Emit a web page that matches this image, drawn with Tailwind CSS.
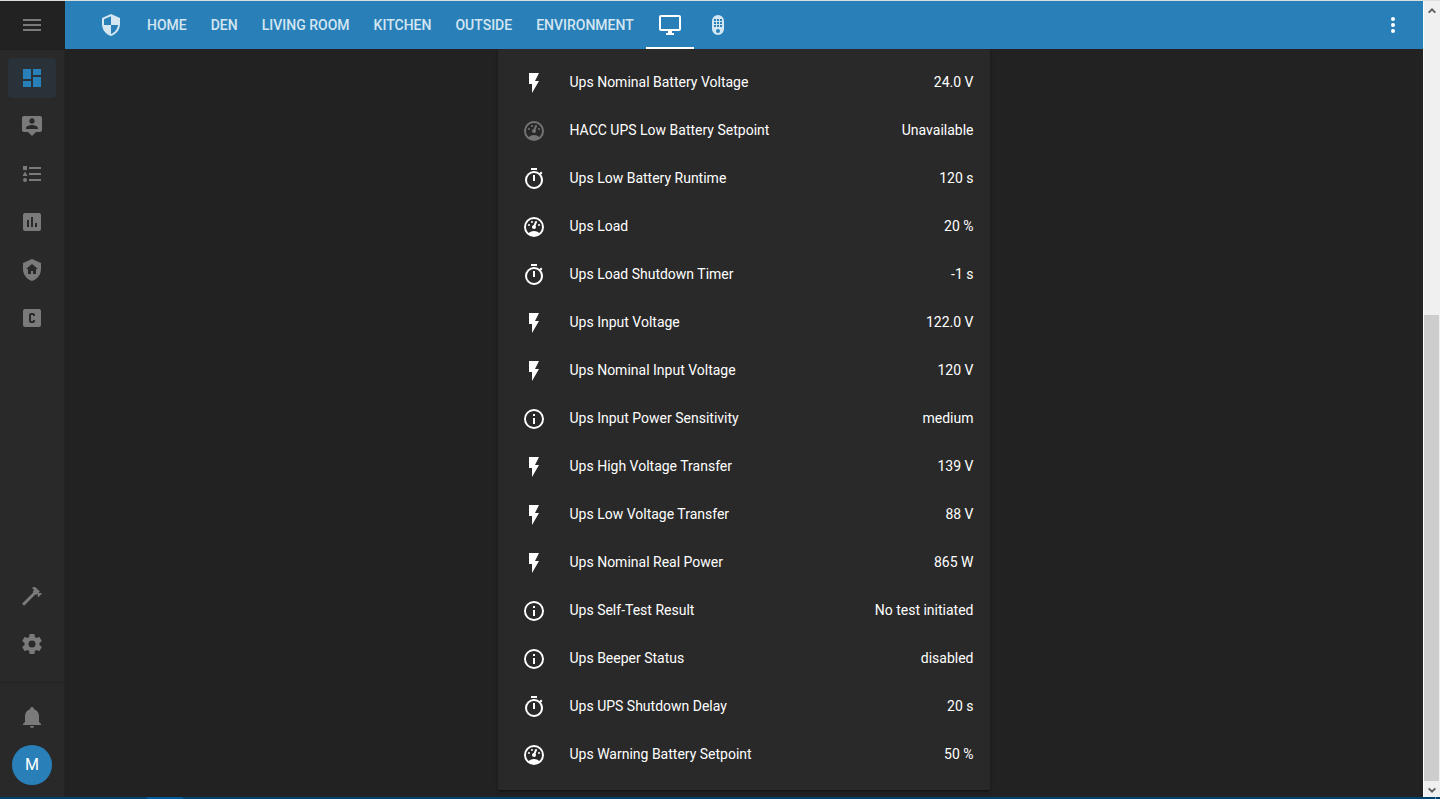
<!DOCTYPE html>
<html lang="en">
<head>
<meta charset="utf-8">
<title>Home Assistant</title>
<script src="https://cdn.jsdelivr.net/npm/@tailwindcss/browser@4"></script>
</head>
<body class="h-[799px] overflow-hidden bg-[#222222] font-[Roboto,sans-serif] text-sm text-white">
<svg class="hidden">
  <symbol id="flash" viewBox="0 0 24 24"><path d="M7,2V13H10V22L17,10H13L17,2H7Z"/></symbol>
  <symbol id="gauge" viewBox="0 0 24 24"><path fill-rule="evenodd" d="M12,2A10,10 0 0,0 2,12A10,10 0 0,0 12,22A10,10 0 0,0 22,12A10,10 0 0,0 12,2M12,4A8,8 0 0,1 20,12C20,14.4 19,16.5 17.3,18C15.9,16.7 14,16 12,16C10,16 8.2,16.7 6.7,18C5,16.5 4,14.4 4,12A8,8 0 0,1 12,4M14,5.89C13.62,5.9 13.26,6.15 13.1,6.54L11.81,9.77L11.71,10C11,10.13 10.41,10.6 10.14,11.26C9.73,12.29 10.23,13.45 11.26,13.86C12.29,14.27 13.45,13.77 13.86,12.74C14.12,12.08 14,11.32 13.57,10.76L13.67,10.5L14.96,7.29L14.97,7.26C15.17,6.75 14.92,6.17 14.41,5.96C14.28,5.91 14.15,5.89 14,5.89M10,6A1,1 0 0,0 9,7A1,1 0 0,0 10,8A1,1 0 0,0 11,7A1,1 0 0,0 10,6M7,9A1,1 0 0,0 6,10A1,1 0 0,0 7,11A1,1 0 0,0 8,10A1,1 0 0,0 7,9M17,9A1,1 0 0,0 16,10A1,1 0 0,0 17,11A1,1 0 0,0 18,10A1,1 0 0,0 17,9Z"/></symbol>
  <symbol id="timer" viewBox="0 0 24 24"><path fill-rule="evenodd" d="M12,20A7,7 0 0,1 5,13A7,7 0 0,1 12,6A7,7 0 0,1 19,13A7,7 0 0,1 12,20M19.03,7.39L20.45,5.97C20,5.46 19.55,5 19.04,4.56L17.62,6C16.07,4.74 14.12,4 12,4A9,9 0 0,0 3,13A9,9 0 0,0 12,22C17,22 21,17.97 21,13C21,10.88 20.26,8.93 19.03,7.39M11,14H13V8H11M15,1H9V3H15V1Z"/></symbol>
  <symbol id="info" viewBox="0 0 24 24"><path fill-rule="evenodd" d="M11,9H13V7H11M12,20C7.59,20 4,16.41 4,12C4,7.59 7.59,4 12,4C16.41,4 20,7.59 20,12C20,16.41 16.41,20 12,20M12,2A10,10 0 0,0 2,12A10,10 0 0,0 12,22A10,10 0 0,0 22,12A10,10 0 0,0 12,2M11,17H13V11H11V17Z"/></symbol>
</svg>
<div class="flex h-full flex-col">
  <div class="h-px shrink-0 bg-[#dcdfe0]"></div>
  <div class="flex min-h-0 flex-1">
    <aside class="flex w-[65px] shrink-0 flex-col border-r border-[#242424] bg-[#292929] text-[#7a7a7a]">
      <div class="-mr-px flex h-[49px] shrink-0 items-start border-b border-[#1e1e1e] bg-[#222222] pt-3 pl-5">
        <svg class="size-6 fill-current" viewBox="0 0 24 24"><path d="M3,6H21V8H3V6M3,11H21V13H3V11M3,16H21V18H3V16Z"/></svg>
      </div>
      <nav class="flex flex-1 flex-col gap-2 px-2 pt-2">
        <a class="flex h-10 w-12 items-center justify-center rounded bg-[#293239] text-[#2980b9]"><svg class="size-6 fill-current" viewBox="0 0 24 24"><path d="M13,3V9H21V3M13,21H21V11H13M3,21H11V15H3M3,13H11V3H3V13Z"/></svg></a>
        <a class="flex h-10 w-12 items-center justify-center"><svg class="size-6 fill-current" viewBox="0 0 24 24"><path fill-rule="evenodd" d="M4,2H20A2,2 0 0,1 22,4V16A2,2 0 0,1 20,18H16L12,22L8,18H4C2.89,18 2,17.1 2,16V4C2,2.89 2.9,2 4,2M12,4.3C10.5,4.3 9.3,5.5 9.3,7C9.3,8.5 10.5,9.7 12,9.7C13.5,9.7 14.7,8.5 14.7,7C14.7,5.5 13.5,4.3 12,4.3M18,15V14.1C18,12.1 14,11 12,11C10,11 6,12.1 6,14.1V15H18Z"/></svg></a>
        <a class="flex h-10 w-12 items-center justify-center"><svg class="size-6 fill-current" viewBox="0 0 24 24"><path d="M5,9.5L7.5,14H2.5L5,9.5M3,4H7V8H3V4M5,20A2,2 0 0,0 7,18A2,2 0 0,0 5,16A2,2 0 0,0 3,18A2,2 0 0,0 5,20M9,5V7H21V5H9M9,19H21V17H9V19M9,13H21V11H9V13Z"/></svg></a>
        <a class="flex h-10 w-12 items-center justify-center"><svg class="size-6 fill-current" viewBox="0 0 24 24"><path fill-rule="evenodd" d="M9,17H7V10H9M13,17H11V7H13M17,17H15V13H17M19,3H5A2,2 0 0,0 3,5V19A2,2 0 0,0 5,21H19A2,2 0 0,0 21,19V5A2,2 0 0,0 19,3Z"/></svg></a>
        <a class="flex h-10 w-12 items-center justify-center"><svg class="size-6 fill-current" viewBox="0 0 24 24"><path fill-rule="evenodd" d="M11,13H13V16H16V11H18L12,6L6,11H8V16H11V13M12,1L21,5V11C21,16.55 17.16,21.74 12,23C6.84,21.74 3,16.55 3,11V5L12,1Z"/></svg></a>
        <a class="flex h-10 w-12 items-center justify-center"><svg class="size-6 fill-current" viewBox="0 0 24 24"><path fill-rule="evenodd" d="M5,3H19A2,2 0 0,1 21,5V19A2,2 0 0,1 19,21H5A2,2 0 0,1 3,19V5A2,2 0 0,1 5,3M11,7A2,2 0 0,0 9,9V15A2,2 0 0,0 11,17H13A2,2 0 0,0 15,15V14H13V15H11V9H13V10H15V9A2,2 0 0,0 13,7H11Z"/></svg></a>
      </nav>
      <div class="flex h-[107px] shrink-0 flex-col gap-2 border-b border-[#222222] px-2">
        <a class="flex h-10 w-12 items-center justify-center"><svg class="size-6 fill-current" viewBox="0 0 24 24"><path d="M2,19.63L13.43,8.2L12.72,7.5L14.14,6.07L12,3.89C13.2,2.7 15.09,2.7 16.27,3.89L19.87,7.5L18.45,8.91H21.29L22,9.62L18.45,13.21L17.74,12.5V9.62L16.27,11.04L15.56,10.33L4.13,21.76L2,19.63Z"/></svg></a>
        <a class="flex h-10 w-12 items-center justify-center"><svg class="size-6 fill-current" viewBox="0 0 24 24"><path fill-rule="evenodd" d="M12,15.5A3.5,3.5 0 0,1 8.5,12A3.5,3.5 0 0,1 12,8.5A3.5,3.5 0 0,1 15.5,12A3.5,3.5 0 0,1 12,15.5M19.43,12.97C19.47,12.65 19.5,12.33 19.5,12C19.5,11.67 19.47,11.34 19.43,11L21.54,9.37C21.73,9.22 21.78,8.95 21.66,8.73L19.66,5.27C19.54,5.05 19.27,4.96 19.05,5.05L16.56,6.05C16.04,5.66 15.5,5.32 14.87,5.07L14.5,2.42C14.46,2.18 14.25,2 14,2H10C9.75,2 9.54,2.18 9.5,2.42L9.13,5.07C8.5,5.32 7.96,5.66 7.44,6.05L4.95,5.05C4.73,4.96 4.46,5.05 4.34,5.27L2.34,8.73C2.21,8.95 2.27,9.22 2.46,9.37L4.57,11C4.53,11.34 4.5,11.67 4.5,12C4.5,12.33 4.53,12.65 4.57,12.97L2.46,14.63C2.27,14.78 2.21,15.05 2.34,15.27L4.34,18.73C4.46,18.95 4.73,19.03 4.95,18.95L7.44,17.94C7.96,18.34 8.5,18.68 9.13,18.93L9.5,21.58C9.54,21.82 9.75,22 10,22H14C14.25,22 14.46,21.82 14.5,21.58L14.87,18.93C15.5,18.67 16.04,18.34 16.56,17.94L19.05,18.95C19.27,19.03 19.54,18.95 19.66,18.73L21.66,15.27C21.78,15.05 21.73,14.78 21.54,14.63L19.43,12.97Z"/></svg></a>
      </div>
      <div class="flex h-[114px] shrink-0 flex-col items-center gap-4 pt-[22px]">
        <svg class="size-6 shrink-0 fill-current" viewBox="0 0 24 24"><path d="M21,19V20H3V19L5,17V11C5,7.9 7.03,5.17 10,4.29C10,4.19 10,4.1 10,4A2,2 0 0,1 12,2A2,2 0 0,1 14,4C14,4.1 14,4.19 14,4.29C16.97,5.17 19,7.9 19,11V17L21,19M14,21A2,2 0 0,1 12,23A2,2 0 0,1 10,21"/></svg>
        <div class="flex size-10 shrink-0 items-center justify-center rounded-full bg-[#2980b9] text-base text-white">M</div>
      </div>
    </aside>
    <div class="flex min-w-0 flex-1 flex-col">
      <header class="flex h-12 shrink-0 items-stretch bg-[#2980b9] pl-[22px] font-medium text-[#d4e6f1]">
        <div class="flex w-12 items-center justify-center"><svg class="size-6 fill-current" viewBox="0 0 24 24"><path fill-rule="evenodd" d="M12,12H19C18.47,16.11 15.72,19.78 12,20.92V12H5V6.3L12,3.19M12,1L3,5V11C3,16.55 6.84,21.73 12,23C17.16,21.73 21,16.55 21,11V5L12,1Z"/></svg></div>
        <div class="flex items-center px-3">HOME</div>
        <div class="flex items-center px-3">DEN</div>
        <div class="flex items-center px-3">LIVING ROOM</div>
        <div class="flex items-center px-3">KITCHEN</div>
        <div class="flex items-center px-3">OUTSIDE</div>
        <div class="flex items-center px-3">ENVIRONMENT</div>
        <div class="flex w-12 items-center justify-center border-b-2 border-white pt-0.5 text-white"><svg class="size-6 fill-current" viewBox="0 0 24 24"><path fill-rule="evenodd" d="M21,16H3V4H21M21,2H3C1.89,2 1,2.89 1,4V16A2,2 0 0,0 3,18H10V20H8V22H16V20H14V18H21A2,2 0 0,0 23,16V4C23,2.89 22.1,2 21,2Z"/></svg></div>
        <div class="flex w-12 items-center justify-center"><svg class="size-6 fill-current" viewBox="0 0 24 24"><path fill-rule="evenodd" d="M12,2A6,6 0 0,1 18,8V16A6,6 0 0,1 6,16V8A6,6 0 0,1 12,2M8,6V8H10V6M11,6V8H13V6M14,6V8H16V6M8,9V11H10V9M11,9V11H13V9M14,9V11H16V9M8,12V14H10V12M11,12V14H13V12M14,12V14H16V12M12,16A2,2 0 0,0 12,20A2,2 0 0,0 12,16Z"/></svg></div>
        <div class="ml-auto flex items-center pr-[18px] text-white"><svg class="size-6 fill-current" viewBox="0 0 24 24"><circle cx="12" cy="6" r="2"/><circle cx="12" cy="12" r="2"/><circle cx="12" cy="18" r="2"/></svg></div>
      </header>
      <main class="flex min-h-0 flex-1 overflow-hidden pl-[433px]">
        <section id="rows" class="h-[741px] w-[492px] rounded-b-xs bg-[#292929] px-4 pt-[9px] shadow-[0_2px_2px_0_rgba(0,0,0,0.14),0_1px_5px_0_rgba(0,0,0,0.12),0_3px_1px_-2px_rgba(0,0,0,0.2)]"></section>
      </main>
    </div>
    <div class="flex w-[17px] shrink-0 flex-col border-l border-white bg-[#f0f0f0]">
      <div class="flex h-[314px] justify-center pt-1.5"><svg class="h-2 w-2" viewBox="0 0 8 8" fill="none" stroke="#606060" stroke-width="2"><path d="M0.7,5.6L4,2.3L7.3,5.6"/></svg></div>
      <div class="h-[466px] w-[15px] bg-[#cdcdcd]"></div>
      <div class="flex flex-1 justify-center pt-[5px]"><svg class="h-2 w-2" viewBox="0 0 8 8" fill="none" stroke="#606060" stroke-width="2"><path d="M0.7,2.4L4,5.7L7.3,2.4"/></svg></div>
    </div>
  </div>
  <div class="flex h-0.5 shrink-0 bg-[#00416f] pl-[147px]"><div class="w-9 bg-[#005a9e]"></div><div class="mr-1 ml-auto w-px bg-[#6b8ea8]"></div></div>
</div>
<script>
const entities = [
  ['flash', 'Ups Nominal Battery Voltage', '24.0 V'],
  ['gauge', 'HACC UPS Low Battery Setpoint', 'Unavailable'],
  ['timer', 'Ups Low Battery Runtime', '120 s'],
  ['gauge', 'Ups Load', '20 %'],
  ['timer', 'Ups Load Shutdown Timer', '-1 s'],
  ['flash', 'Ups Input Voltage', '122.0 V'],
  ['flash', 'Ups Nominal Input Voltage', '120 V'],
  ['info', 'Ups Input Power Sensitivity', 'medium'],
  ['flash', 'Ups High Voltage Transfer', '139 V'],
  ['flash', 'Ups Low Voltage Transfer', '88 V'],
  ['flash', 'Ups Nominal Real Power', '865 W'],
  ['info', 'Ups Self-Test Result', 'No test initiated'],
  ['info', 'Ups Beeper Status', 'disabled'],
  ['timer', 'Ups UPS Shutdown Delay', '20 s'],
  ['gauge', 'Ups Warning Battery Setpoint', '50 %'],
];
document.getElementById('rows').innerHTML = entities.map(([icon, name, state]) => `
  <div class="flex h-12 items-center pl-2">
    <svg class="mt-0.5 mr-[23.5px] size-6 shrink-0 ${state === 'Unavailable' ? 'fill-[#747474]' : 'fill-white'}"><use href="#${icon}"/></svg>
    <div class="flex-1">${name}</div>
    <div class="pr-[0.5px]">${state}</div>
  </div>`).join('');
</script>
</body>
</html>
